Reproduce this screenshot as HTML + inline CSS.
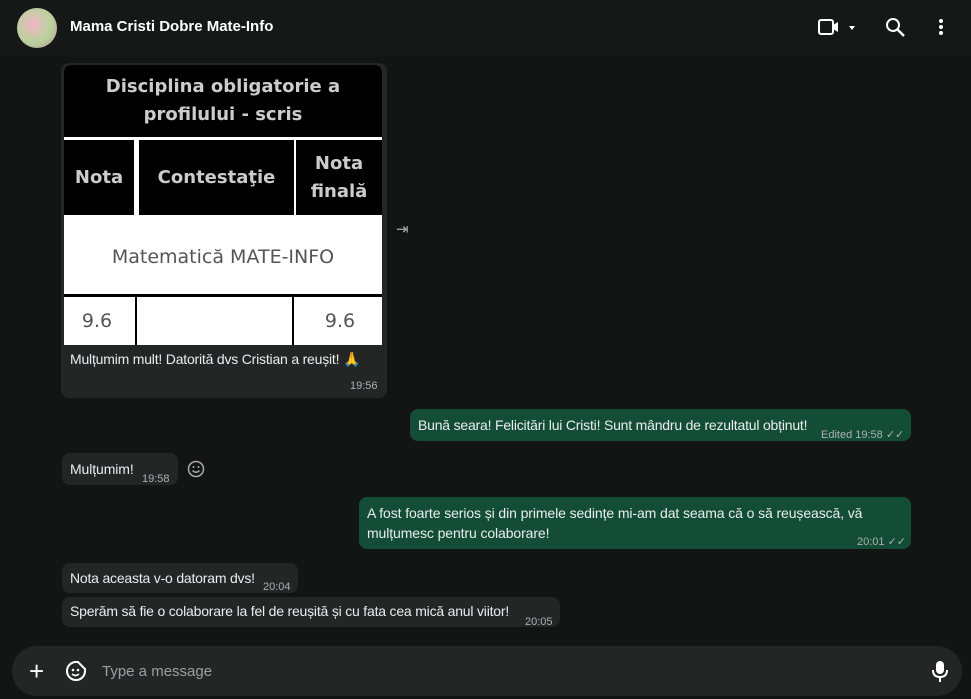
<!DOCTYPE html>
<html><head><meta charset="utf-8"><style>
*{margin:0;padding:0;box-sizing:border-box}
body{width:971px;height:699px;background:#131414;font-family:"Liberation Sans",sans-serif;color:#e9edef;position:relative;overflow:hidden}
.hdr{position:absolute;left:0;top:0;width:971px;height:56px;background:#161717}
.av{position:absolute;left:17px;top:8px;width:40px;height:40px;border-radius:50%;background:radial-gradient(circle at 40% 40%,#f3b6c8,#b7d39a 55%,#c48aa0)}
.name{position:absolute;left:70px;top:18px;font-size:15px;font-weight:bold;color:#fff}
.b{position:absolute;border-radius:8px;font-size:14px;line-height:20px;letter-spacing:-0.1px}
.in{background:#242626}
.out{background:#144d37}
.t{font-size:11px;color:#aab0b3;position:absolute;letter-spacing:0}
.cell{position:absolute;background:#000;color:#ccc;font-family:"DejaVu Sans",sans-serif;font-weight:bold;display:flex;align-items:center;justify-content:center;text-align:center}
.w{background:#fff;color:#555;font-weight:normal}
.inp{position:absolute;left:12px;top:646px;width:950px;height:50px;border-radius:25px;background:#242626}
</style></head><body>
<div class="hdr">
<div class="av"></div>
<div class="name">Mama Cristi Dobre Mate-Info</div>
<svg style="position:absolute;left:818px;top:18px" width="42" height="20"><rect x="1" y="2" width="14" height="14" rx="2" fill="none" stroke="#fff" stroke-width="2"/><path d="M15 7 L20 4 V14 L15 11Z" fill="#fff"/><path d="M31 8 L37 8 L34 12Z" fill="#fff"/></svg>
<svg style="position:absolute;left:885px;top:17px" width="22" height="22"><circle cx="8" cy="8" r="6" fill="none" stroke="#fff" stroke-width="2"/><path d="M12.5 12.5 L19 19" stroke="#fff" stroke-width="2.4"/></svg>
<svg style="position:absolute;left:936px;top:17px" width="10" height="22"><circle cx="5" cy="4" r="2" fill="#fff"/><circle cx="5" cy="10" r="2" fill="#fff"/><circle cx="5" cy="16" r="2" fill="#fff"/></svg>
</div>

<div class="b in" style="left:61px;top:63px;width:326px;height:335px"></div>
<div style="position:absolute;left:64px;top:65px;width:318px;height:280px;background:#fff;border-radius:6px 6px 0 0;overflow:hidden">
<div class="cell" style="left:0;top:0;width:318px;height:72px;font-size:18px;line-height:28px">Disciplina obligatorie a<br>profilului - scris</div>
<div class="cell" style="left:0;top:75px;width:70px;height:75px;font-size:18px">Nota</div>
<div class="cell" style="left:75px;top:75px;width:155px;height:75px;font-size:18px">Contestaţie</div>
<div class="cell" style="left:232px;top:75px;width:86px;height:75px;font-size:18px;line-height:28px">Nota<br>finală</div>
<div class="cell w" style="left:0;top:155px;width:318px;height:74px;font-size:19px">Matematică MATE-INFO</div>
<div style="position:absolute;left:0;top:229px;width:318px;height:3px;background:#000"></div>
<div style="position:absolute;left:71px;top:229px;width:2px;height:51px;background:#000"></div>
<div style="position:absolute;left:228px;top:229px;width:2px;height:51px;background:#000"></div>
<div class="cell w" style="left:0;top:232px;width:66px;height:48px;font-size:19px;background:transparent">9.6</div>
<div class="cell w" style="left:238px;top:232px;width:76px;height:48px;font-size:19px;background:transparent">9.6</div>
</div>
<div style="position:absolute;left:70px;top:351px;font-size:14px;letter-spacing:-0.2px">Mulțumim mult! Datorită dvs Cristian a reușit! 🙏</div>
<div class="t" style="left:350px;top:380px">19:56</div>
<div style="position:absolute;left:396px;top:220px;color:#aaa;font-size:15px">⇥</div>

<div class="b out" style="left:410px;top:409px;width:501px;height:32px"><span style="position:absolute;left:8px;top:6px;letter-spacing:-0.2px">Bună seara! Felicitări lui Cristi! Sunt mândru de rezultatul obținut!</span><span class="t" style="left:411px;top:16px">Edited 19:58 ✓✓</span></div>

<div class="b in" style="left:62px;top:453px;width:116px;height:32px"><span style="position:absolute;left:8px;top:6px">Mulțumim!</span><span class="t" style="left:80px;top:16px">19:58</span></div>
<svg style="position:absolute;left:187px;top:460px" width="18" height="18"><circle cx="9" cy="9" r="7.5" fill="none" stroke="#aaa" stroke-width="1.5"/><circle cx="6.5" cy="7" r="1" fill="#aaa"/><circle cx="11.5" cy="7" r="1" fill="#aaa"/><path d="M5.5 10.5 Q9 14 12.5 10.5" fill="none" stroke="#aaa" stroke-width="1.4"/></svg>

<div class="b out" style="left:359px;top:497px;width:552px;height:52px"><span style="position:absolute;left:8px;top:6px;width:520px">A fost foarte serios și din primele sedințe mi-am dat seama că o să reușească, vă mulțumesc pentru colaborare!</span><span class="t" style="left:498px;top:35px">20:01 ✓✓</span></div>

<div class="b in" style="left:62px;top:563px;width:236px;height:30px"><span style="position:absolute;left:8px;top:5px;letter-spacing:-0.2px">Nota aceasta v-o datoram dvs!</span><span class="t" style="left:201px;top:14px">20:04</span></div>
<div class="b in" style="left:62px;top:597px;width:498px;height:30px"><span style="position:absolute;left:8px;top:4px;letter-spacing:-0.2px">Sperăm să fie o colaborare la fel de reușită și cu fata cea mică anul viitor!</span><span class="t" style="left:463px;top:15px">20:05</span></div>

<div class="inp">
<div style="position:absolute;left:17px;top:10px;font-size:26px;color:#fff;font-weight:300">+</div>
<svg style="position:absolute;left:53px;top:14px" width="22" height="22"><path d="M11 2 A9 9 0 1 0 20 11 L20 9 L13 2Z" fill="none" stroke="#fff" stroke-width="2"/><circle cx="8" cy="10" r="1.3" fill="#fff"/><circle cx="13" cy="10" r="1.3" fill="#fff"/><path d="M7 14 Q10.5 17 14 14" fill="none" stroke="#fff" stroke-width="1.6"/></svg>
<div style="position:absolute;left:90px;top:17px;font-size:15px;color:#9aa0a3">Type a message</div>
<svg style="position:absolute;left:919px;top:14px" width="18" height="24"><rect x="5" y="1" width="8" height="13" rx="4" fill="#fff"/><path d="M2 10 Q2 17 9 17 Q16 17 16 10 M9 17 V22" fill="none" stroke="#fff" stroke-width="2"/></svg>
</div>
</body></html>
